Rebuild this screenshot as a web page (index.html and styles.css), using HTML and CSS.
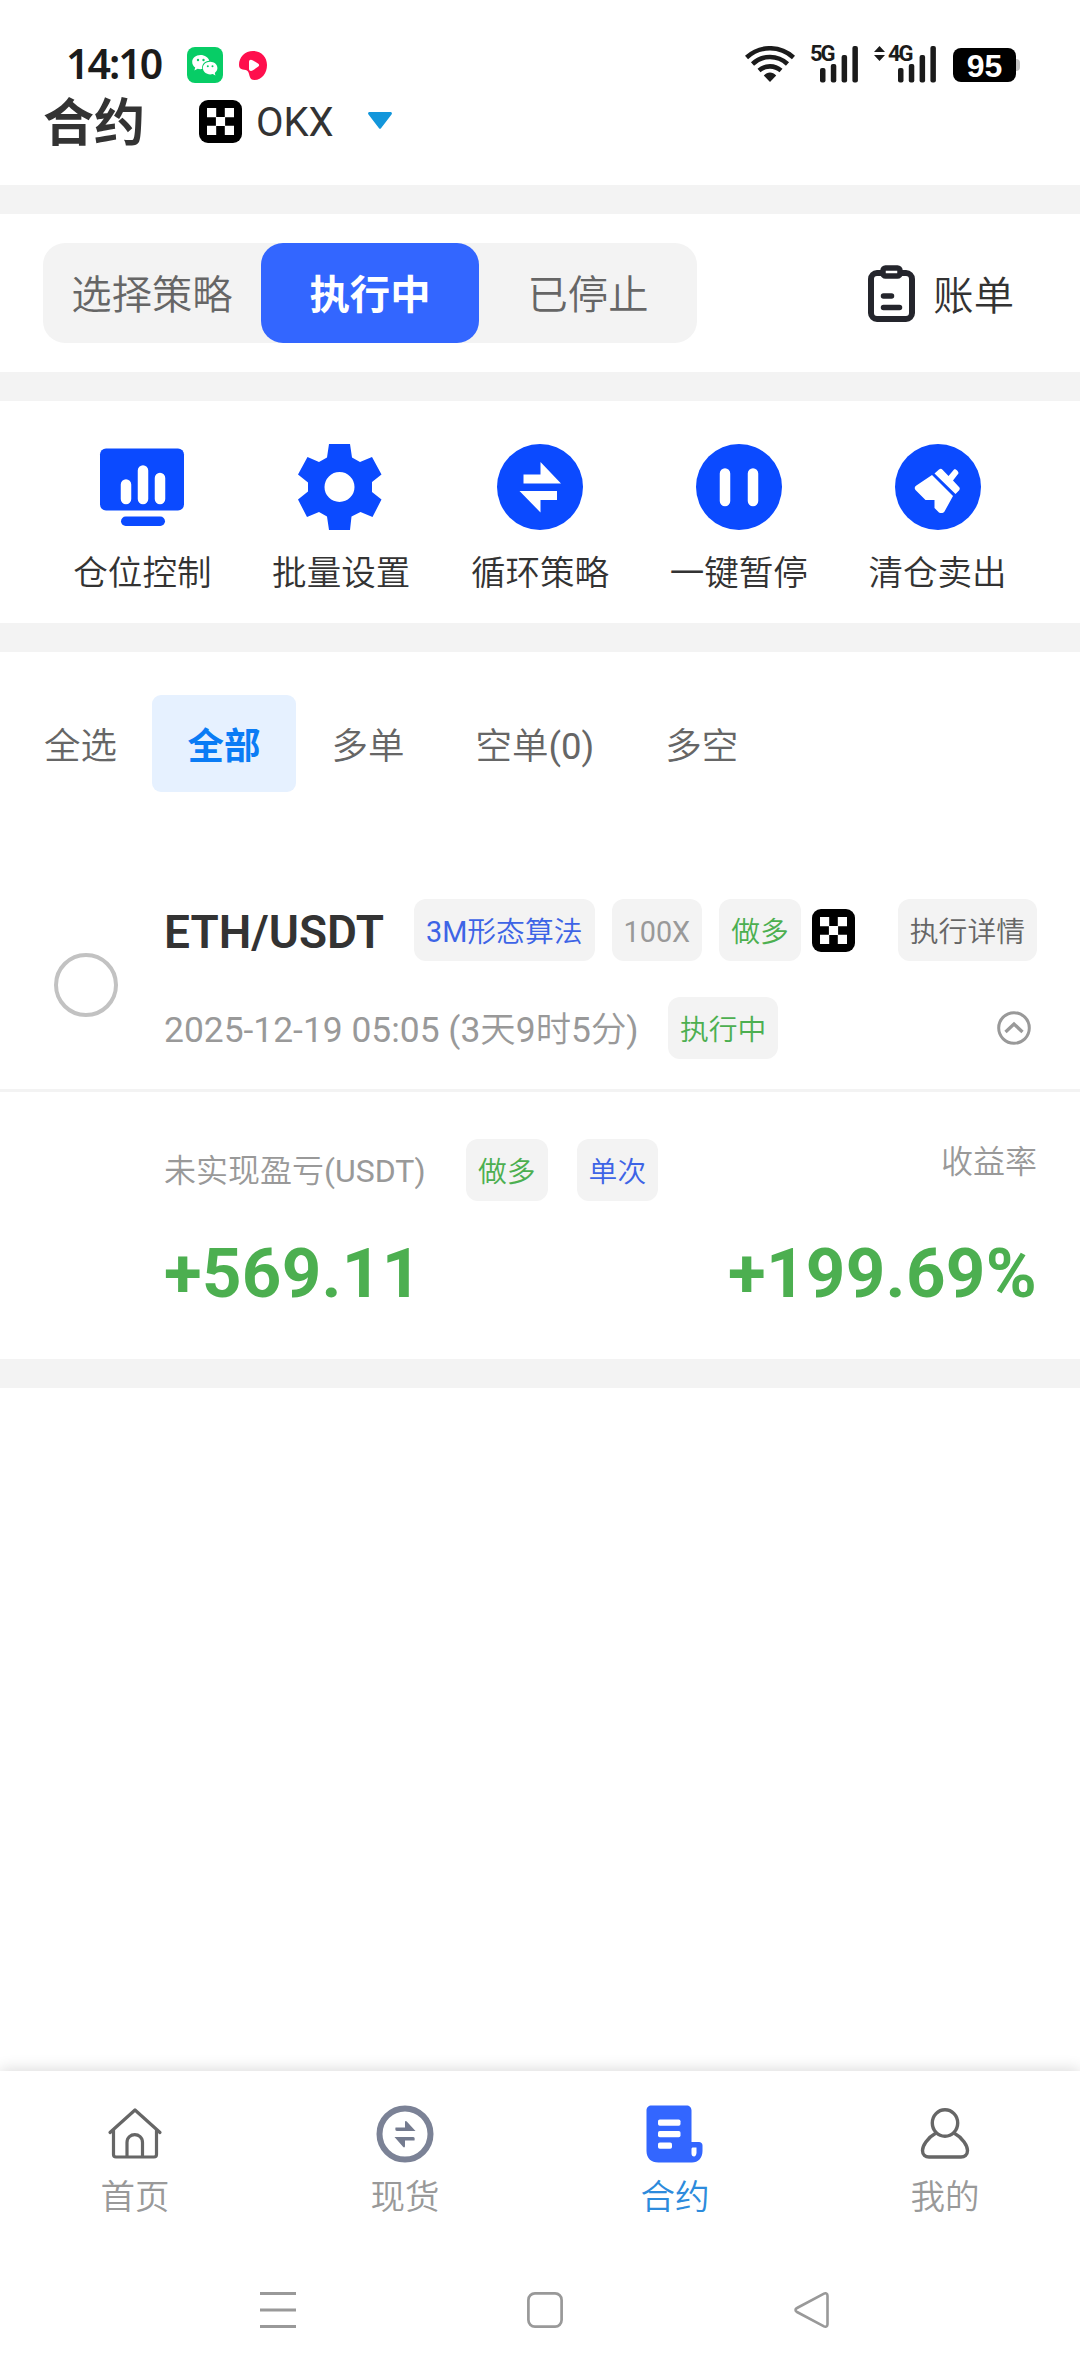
FILE: index.html
```html
<!DOCTYPE html>
<html lang="zh-CN">
<head>
<meta charset="utf-8">
<title>合约</title>
<link rel="stylesheet" href="styles.css">
</head>
<body>
<svg class="defs" width="0" height="0">
  <symbol id="okx" viewBox="0 0 43 43">
    <rect width="43" height="43" rx="9"/>
    <path fill="#fff" d="M8 8h9.2v9.2H8zM25.8 8H35v9.2h-9.2zM16.9 16.9h9.2v9.2h-9.2zM8 25.8h9.2V35H8zM25.8 25.8H35V35h-9.2z"/>
  </symbol>
  <symbol id="bars" viewBox="0 0 38 37">
    <rect y="22" width="5.5" height="14.500" rx="2"/><rect x="10.800" y="18" width="5.500" height="18.500" rx="2"/><rect x="21.600" y="9" width="5.500" height="27.500" rx="2"/><rect x="32.400" y="0" width="5.500" height="36.500" rx="2"/>
  </symbol>
</svg>
<div class="page">
  <header class="header">
    <div class="status">
      <span class="clock">14:10</span>
      <svg class="wechat" width="36" height="36" viewBox="0 0 36 36"><rect width="36" height="36" rx="8" fill="#07cd66"/><path fill="#fff" d="M13.500 8C8.800 8 5.200 11 5.200 15c0 2.300 1.200 4.200 3 5.500l-.8 3 3.200-1.700c1.500.5 3.100.5 4.700.3C14.300 17.700 17.700 14 22.300 13.800 21.400 10.500 17.800 8 13.500 8z"/><path fill="#fff" d="M23.200 14.800c-4.200 0-7.300 2.800-7.300 6.300s3.100 6.300 7.300 6.300c.9 0 1.800-.1 2.600-.4l2.600 1.500-.6-2.600c1.600-1.200 2.600-2.900 2.600-4.800 0-3.500-3.200-6.300-7.200-6.300z"/><g fill="#07cd66"><circle cx="11" cy="13" r="1.200"/><circle cx="16.500" cy="13" r="1.200"/><circle cx="20.800" cy="19.200" r="1"/><circle cx="25.500" cy="19.200" r="1"/></g></svg>
      <svg class="player" width="28" height="29" viewBox="0 0 28 29"><path fill="#ff0f4d" d="M14 0C22 0 28 6 28 14c0 8-5 15-12.500 15C10 29 11 24 9 20.500 7 17.500 0 20 0 14 0 6 6 0 14 0z"/><path fill="#fff" d="M10 11c0-2.500 2-2.800 4-1.500l5 3c1.500 1 1.500 2.300 0 3.300l-5 3.400c-2 1.300-4 .800-4-1.500z"/></svg>
      <span class="spacer"></span>
      <svg class="wifi" width="50" height="36" viewBox="0 0 50 36" fill="none" stroke="#1b1b1b" stroke-width="4.600"><path d="M1.500 11.500C15-.8 35-.8 48.500 11.500M7.500 18c10-9.300 25-9.300 35 0M14 24.500c6.500-5.500 15.500-5.500 22 0"/><path fill="#1b1b1b" stroke="none" d="M25 36l-6.200-6.500c3.500-4 8.900-4 12.400 0z"/></svg>
      <span class="cell"><b>5G</b><svg width="38" height="37"><use href="#bars"/></svg></span>
      <span class="cell cell-data"><svg class="updown" width="11" height="15" viewBox="0 0 11 15"><path d="M5.500 0L11 6H0zM5.500 15L0 9h11z"/></svg><b>4G</b><svg width="38" height="37"><use href="#bars"/></svg></span>
      <span class="battery">95</span>
    </div>
    <div class="title-row">
      <h1>合约</h1>
      <svg class="logo" width="43" height="43"><use href="#okx"/></svg>
      <span class="exchange">OKX</span>
      <svg class="caret" width="24" height="17" viewBox="0 0 24 17"><path fill="#1296db" d="M1.500 0h21c1.300 0 1.900 1.500 1 2.500L13 16.300c-.6.700-1.400.7-2 0L.5 2.500C-.4 1.500.2 0 1.500 0z"/></svg>
    </div>
  </header>

  <section class="modes">
    <div class="segmented"><span>选择策略</span><span class="on">执行中</span><span>已停止</span></div>
    <a class="bill">
      <svg width="47" height="57" viewBox="0 0 47 57" fill="none" stroke="#24252c" stroke-width="6"><rect x="3" y="8" width="41" height="46" rx="6"/><rect x="15" y="3" width="17" height="8" rx="2.500" fill="#fff" stroke-width="5.500"/><path stroke-linecap="round" stroke-width="5.500" d="M15.500 31h8M15.500 42.500h16"/></svg>
      <span>账单</span>
    </a>
  </section>

  <nav class="actions">
    <a><svg width="86" height="86" viewBox="0 0 86 86" fill="#0b4aff"><rect x="1" y="4.500" width="84" height="62" rx="6"/><rect x="22" y="72.500" width="44" height="9.500" rx="4.700"/><path stroke="#fff" stroke-width="10.500" stroke-linecap="round" d="M27 40.500V55M44 26.500V55M61 34V55"/></svg><span>仓位控制</span></a>
    <a><svg width="86" height="86" viewBox="1.500 0 86 86"><path fill="#0b4aff" fill-rule="evenodd" d="M32.500 0h21l2 13.500 8 4.500 12-5 9.500 17.500-9.500 7.500v10l9.500 7.500L76 73l-12-5-9 4.500L53.500 86h-21l-2-13.500-8-4.500-12 5L1.500 55.500l10-8v-9L1.500 30.500 11 13l11.500 5 8-4.500zM43 28a15 15 0 100 30 15 15 0 000-30z"/></svg><span>批量设置</span></a>
    <a><svg width="86" height="86" viewBox="0 0 86 86"><circle cx="43" cy="43" r="43" fill="#0b4aff"/><path fill="#fff" d="M26.500 30.500h17V18l20.500 21.500H26.500zM60 56H43.500v12.500L22.500 47H60z"/></svg><span>循环策略</span></a>
    <a><svg width="86" height="86" viewBox="0 0 86 86"><circle cx="43" cy="43" r="43" fill="#0b4aff"/><path stroke="#fff" stroke-width="10.500" stroke-linecap="round" d="M29 29.500V57M57 29.500V57"/></svg><span>一键暂停</span></a>
    <a><svg width="86" height="86" viewBox="0 0 86 86"><circle cx="43" cy="43" r="43" fill="#0b4aff"/><path fill="#fff" d="M37 31L58 52l-8.500 15.500c-1.500 2-5 2-6.500 0L39.500 64v-8h-9L20.500 46c-1.200-1.500-1-3 .5-4.200zM39.500 29.500l4.500-4c1.500-1 2.500-.8 3.500.2l6 6.300 5.500-6.500c1.300-1.300 5.500 2.500 4.200 4.200L58 36.500l6 6.500c1 1 1 2 .2 3.200L60.500 50z"/></svg><span>清仓卖出</span></a>
  </nav>

  <nav class="filters"><span class="all">全选</span><span class="on">全部</span><span>多单</span><span>空单(0)</span><span>多空</span></nav>

  <article class="order">
    <div class="order-head">
      <i class="radio"></i>
      <div class="order-info">
        <div class="line">
          <strong class="pair">ETH/USDT</strong>
          <span class="tag blue">3M形态算法</span><span class="tag grey">100X</span><span class="tag green">做多</span>
          <svg class="mini-logo" width="43" height="43"><use href="#okx"/></svg>
          <span class="tag dark detail">执行详情</span>
        </div>
        <div class="line second">
          <time>2025-12-19 05:05 (3天9时5分)</time>
          <span class="tag green">执行中</span>
          <svg class="collapse" width="34" height="34" viewBox="0 0 34 34" fill="none" stroke="#999" stroke-width="3"><circle cx="17" cy="17" r="15.300"/><path stroke-width="3.300" d="M8.500 21l8.500-8 8.500 8"/></svg>
        </div>
      </div>
    </div>
    <div class="order-body">
      <div class="pnl">
        <div class="caption"><span>未实现盈亏(USDT)</span><span class="tag green">做多</span><span class="tag blue">单次</span></div>
        <div class="amount">+569.11</div>
      </div>
      <div class="rate">
        <div class="caption">收益率</div>
        <div class="amount">+199.69%</div>
      </div>
    </div>
  </article>

  <main class="blank"></main>

  <footer class="dock">
    <nav class="tabs">
      <a><svg width="58" height="58" viewBox="0 0 58 58" fill="none" stroke="#666" stroke-width="3.200" stroke-linecap="round" stroke-linejoin="round"><path d="M4 27.500L29 5l25 22.500M7.500 25v24.500c0 1.500 1 2.500 2.500 2.500h38c1.500 0 2.500-1 2.500-2.500V25M21 52V37.500c0-10.500 15.500-10.500 15.500 0V52"/></svg><span>首页</span></a>
      <a><svg width="58" height="58" viewBox="0 0 58 58"><circle cx="29" cy="29" r="25.500" fill="none" stroke="#7b8296" stroke-width="6"/><path fill="#747b8f" d="M19.500 22.500h9.500v-5c0-1.500 1-1.800 2-.8l8.500 9.300H21c-1.500 0-2-1-1.500-3.500zM38.500 35.500H29v5.500c0 1.500-1 1.800-2 .8L18.500 32H37c1.500 0 2 1 1.500 3.500z"/></svg><span>现货</span></a>
      <a class="on"><svg width="58" height="58" viewBox="0 0 58 58"><path fill="#3366ff" d="M5.500.5h35c3 0 5 2 5 5V37H53c2 0 3.500 1.500 3.500 3.500V46C56.500 53 52 57.500 46 57.500H12.500C5 57.500.5 53 .5 46V5.500c0-3 2-5 5-5z"/><g fill="#fff"><rect x="12" y="14.500" width="22.500" height="6.300" rx="1.800"/><rect x="12" y="26" width="22.500" height="6.300" rx="1.800"/><rect x="12" y="37.500" width="14" height="6.300" rx="1.800"/><path d="M47 42.500h3.500v5c0 2-1 4-2.500 4s-2.500-1-2.500-3V44c0-1 .5-1.500 1.500-1.500z"/></g></svg><span>合约</span></a>
      <a><svg width="58" height="58" viewBox="0 0 58 58" fill="none" stroke="#666" stroke-width="3.400"><ellipse cx="29" cy="18" rx="12.700" ry="13.200"/><path d="M20 28C11 33 6.500 41 6.500 45.500S9.500 52 13 52h32c3.500 0 6.500-2 6.500-6.500S47 33 38 28"/></svg><span>我的</span></a>
    </nav>
    <div class="system">
      <svg width="36" height="36" viewBox="0 0 36 36"><path stroke="#999" stroke-width="3" d="M0 1.500h36M0 18h36M0 34.500h36"/></svg>
      <svg width="36" height="36" viewBox="0 0 36 36"><rect x="1.400" y="1.400" width="33.200" height="33.200" rx="6.500" fill="none" stroke="#999" stroke-width="2.700"/></svg>
      <svg width="36" height="36" viewBox="0 0 36 36"><path fill="none" stroke="#999" stroke-width="2.600" stroke-linejoin="round" d="M3 16L30 1.700c2-1 3.500 0 3.500 2v28.600c0 2-1.500 3-3.500 2L3 20c-2-1-2-3 0-4z"/></svg>
    </div>
  </footer>
</div>
</body>
</html>
```
FILE: styles.css
```css
* { box-sizing: border-box; }
body {
  margin: 0;
  background: #fff;
  color: #333;
  font-family: Roboto, "Noto Sans CJK SC DemiLight", "Noto Sans CJK SC", sans-serif;
}
svg { display: block; flex: none; }
.defs { position: absolute; }
.page {
  width: 1080px;
  height: 2376px;
  display: flex;
  flex-direction: column;
  overflow: hidden;
}
.spacer { flex: 1; }

/* header */
.header { height: 214px; border-bottom: 29px solid #f3f3f3; padding-top: 44px; }
.status { display: flex; height: 42px; padding: 0 64px 0 66px; }
.clock {
  width: 121px;
  font: 600 41px/38px "Noto Sans", sans-serif;
  letter-spacing: -2px;
  color: #1b1b1b;
}
.wechat { margin-top: 3px; }
.player { margin: 7px 0 0 16px; }
.wifi { margin-top: 2px; }
.cell { display: flex; position: relative; margin: 2px 0 0 25px; fill: #1b1b1b; }
.cell b {
  position: absolute;
  left: -10px;
  top: -1px;
  font: 700 22px/18px Roboto, sans-serif;
  letter-spacing: -2px;
  color: #1b1b1b;
}
.cell-data { margin-left: 40px; }
.cell-data .updown { position: absolute; left: -24px; top: 0; }
.battery {
  position: relative;
  width: 63px;
  height: 34px;
  margin: 4px 0 0 17px;
  border-radius: 8px;
  background: #000;
  color: #fff;
  font: 700 32px/36px "Liberation Sans", sans-serif;
  text-align: center;
}
.battery::after {
  content: "";
  position: absolute;
  right: -4px;
  top: 11px;
  width: 4px;
  height: 12px;
  border-radius: 0 4px 4px 0;
  background: #c4c4c4;
}
.title-row { display: flex; align-items: center; height: 70px; padding-left: 43px; }
h1 {
  margin: 0;
  width: 156px;
  padding-top: 6px;
  font: 700 51px/72px Roboto, "Noto Sans CJK SC", sans-serif;
}
.exchange { margin-left: 14px; width: 112px; padding-top: 4px; font-size: 40px; line-height: 72px; }
.caret { margin-bottom: 2px; }

/* mode switch */
.modes {
  display: flex;
  justify-content: space-between;
  align-items: center;
  height: 187px;
  padding: 0 66px 0 43px;
  border-bottom: 29px solid #f3f3f3;
  font-size: 40.32px;
}
.segmented {
  display: flex;
  width: 654px;
  height: 100px;
  border-radius: 22px;
  background: #f3f3f3;
  color: #666;
}
.segmented span { flex: 1; height: 100px; line-height: 106px; text-align: center; border-radius: 22px; }
.segmented .on, .filters .on { font-family: Roboto, "Noto Sans CJK SC", sans-serif; font-weight: 700; }
.segmented .on { background: #3366ff; color: #fff; }
.bill { display: flex; align-items: center; gap: 18px; }
.bill span { margin-top: -2px; }

/* quick actions */
.actions {
  display: flex;
  height: 251px;
  padding: 43px 43px 0;
  border-bottom: 29px solid #f3f3f3;
}
.actions a { flex: 1; display: flex; flex-direction: column; align-items: center; }
.actions span { margin-top: 23px; font-size: 34.56px; line-height: 40px; }

/* filters */
.filters { display: flex; padding: 43px 0 0 43px; color: #666; font-size: 36.5px; line-height: 103px; }
.filters span { height: 97px; padding: 0 35.5px; }
.filters .all { padding-left: 1px; width: 109px; padding-right: 0; }
.filters .on { border-radius: 9px; background: #e6f1ff; color: #0a7cf5; }

/* order card */
.order { margin-top: 107px; height: 489px; border-bottom: 29px solid #f3f3f3; }
.order-head {
  display: flex;
  align-items: flex-start;
  height: 193px;
  padding: 0 43px 0 54px;
  border-bottom: 3px solid #f3f3f3;
}
.radio { width: 64px; height: 64px; margin: 54px 46px 0 0; border: 4px solid #c2c2c2; border-radius: 50%; }
.order-info { flex: 1; }
.line { display: flex; align-items: center; height: 62px; }
.second { margin-top: 36px; }
.pair { width: 250px; padding-top: 3px; font-size: 46px; line-height: 62px; font-weight: 600; }
.tag {
  height: 62px;
  padding: 0 12px;
  border-radius: 12px;
  background: #f3f3f3;
  font-size: 28.8px;
  line-height: 66px;
  white-space: nowrap;
}
.tag + .tag { margin-left: 17px; }
.blue { color: #3d64e6; }
.grey { color: #999; }
.green { color: #4caf50; }
.dark { color: #666; }
.mini-logo { margin-left: 11px; }
.detail, .collapse { margin-left: auto; }
time { width: 504px; padding-top: 4px; font-size: 35.4px; line-height: 60px; color: #999; white-space: nowrap; }
.collapse { margin-right: 6px; }
.order-body { display: flex; justify-content: space-between; padding: 46px 43px 0 164px; }
.caption { display: flex; align-items: center; height: 63px; font-size: 32px; color: #999; }
.caption span:first-child { width: 302px; margin-top: -3px; }
.caption .tag + .tag { margin-left: 29px; }
.rate .caption { height: 42px; justify-content: flex-end; }
.amount { margin-top: 32px; font-size: 69px; line-height: 82px; font-weight: 700; letter-spacing: .3px; color: #4caf50; }
.rate .amount { margin-top: 53px; }

.blank { flex: 1; }

/* bottom bars */
.dock { height: 305px; box-shadow: 0 -2px 14px rgba(0, 0, 0, .14); }
.tabs { display: flex; padding-top: 34px; }
.tabs a { flex: 1; display: flex; flex-direction: column; align-items: center; color: #999; }
.tabs span { margin-top: 14px; font-size: 34.56px; line-height: 40px; }
.tabs .on { color: #2d8bdc; }
.system { display: flex; justify-content: space-between; margin-top: 75px; padding: 0 250px 0 260px; }
```
